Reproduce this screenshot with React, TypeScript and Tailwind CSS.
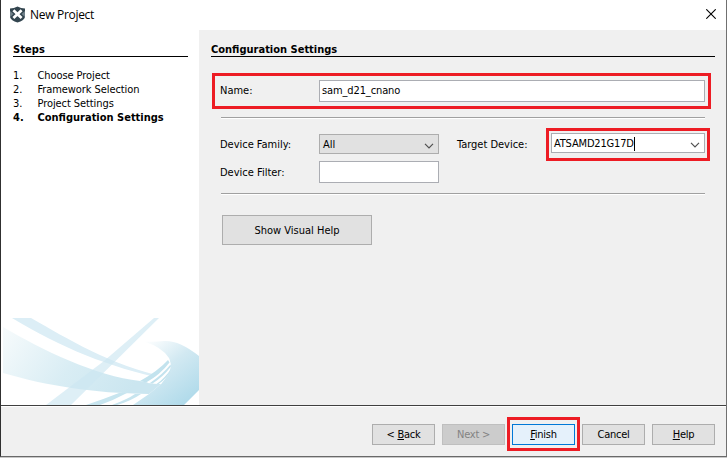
import React from "react";

const steps = ["Choose Project", "Framework Selection", "Project Settings", "Configuration Settings"];

function Logo() {
  return (
    <svg width="17" height="17" viewBox="0 0 17 17" className="shrink-0">
      <path d="M1 2.5 Q5 2.5 8.5 0.5 Q12 2.5 16 2.5 V11 Q15 14.5 8.5 16.5 Q2 14.5 1 11Z" fill="#33454f" />
      <path d="M1 5 L4.5 8 L1 11Z M16 5 L12.5 8 L16 11Z" fill="#71818a" />
      <path d="M4.4 4.2 L12.6 12 M12.6 4.2 L4.4 12" stroke="#fff" strokeWidth="2.7" />
    </svg>
  );
}

function Swoosh() {
  return (
    <svg width="196" height="87" viewBox="3 318 196 87" className="block">
      <defs>
        <linearGradient id="wide" x1="0" y1="0" x2="1" y2="0.3">
          <stop offset="0" stopColor="#f7fbfc" />
          <stop offset="0.55" stopColor="#d9edf4" />
          <stop offset="1" stopColor="#cbe6f0" />
        </linearGradient>
        <linearGradient id="curl" gradientUnits="userSpaceOnUse" x1="146" y1="340" x2="192" y2="400">
          <stop offset="0" stopColor="#ffffff" />
          <stop offset="0.45" stopColor="#d2e9f2" />
          <stop offset="1" stopColor="#afdaea" />
        </linearGradient>
      </defs>
      <path d="M3 327 C42 350 96 376 140 381 C149 383 157 384 161 384 L149 394 C92 393 48 386 3 373Z" fill="url(#wide)" />
      <path d="M12 318 H31 C68 339 110 365 167 377.5 L165 379 C108 367 62 348 12 318Z" fill="#dceef6" />
      <path d="M154 318 H159 L71 405 H46 L104 361Z" fill="#cde7f1" fillOpacity="0.65" />
      <path d="M86 405 Q104 399 119 393 H127 Q114 400 100 405Z M112 405 Q128 399 135 394 H141 Q131 401 117 405Z" fill="#c7e5ef" />
      <path d="M144 341.5 Q155 342 164 341 Q179 340 199 356 V390 L184 405 H133 L149 394 L161 384 Q174 367 169 358 Q162 347 144 341.5Z" fill="url(#curl)" />
      <path d="M161 384 L147 383 Q161 373 169 360 Q175 368 161 384Z" fill="#fff" />
      <path d="M140 381 Q158 371 168 360 L169.5 362.5 Q160 375 146 382.5Z M150 383 Q163 374 170.5 364.5 L171 366.5 Q163 377 152.5 383.5Z M156.5 384 Q165 378 171 369 Q168 378 158.5 384Z" fill="#c3e3ee" />
    </svg>
  );
}

function Chevron() {
  return (
    <svg width="10" height="6" viewBox="0 0 10 6" className="shrink-0">
      <path d="M1 0.8 L5 4.8 L9 0.8" fill="none" stroke="#505050" strokeWidth="1.2" />
    </svg>
  );
}

function Highlight({ className }: { className: string }) {
  return <div className={`pointer-events-none absolute border-[3px] border-[#ed1c24] ${className}`} />;
}

function Rule() {
  return <div className="ml-[10px] h-[2px] w-[484px] shrink-0 border-b border-white bg-[#a0a0a0]" />;
}

function FooterButton({ children, className = "border-[#adadad] bg-[#e1e1e1]" }: { children: React.ReactNode; className?: string }) {
  return <button className={`h-[21px] w-[63px] border text-center leading-[18px] tracking-[-0.25px] ${className}`}>{children}</button>;
}

export default function App() {
  return (
    <div className="flex h-[458px] w-[727px] flex-col overflow-hidden bg-[#c8c8c8] font-['DejaVu_Sans_Condensed','DejaVu_Sans',sans-serif] text-[11px] leading-[14px] text-black [font-stretch:condensed]">
      <div className="flex h-[457px] flex-col border-x border-b border-l-[#303030] border-r-[#707070] border-b-[#696969] bg-[#f0f0f0]">
        <header className="flex h-[30px] shrink-0 items-center bg-white pl-2 pr-[10px]">
          <div className="mt-[-2px]"><Logo /></div>
          <h1 className="ml-[4px] flex-1 font-['Open_Sans',sans-serif] text-[12px] tracking-[-0.3px] [font-stretch:normal]">New Project</h1>
          <svg width="10" height="10" viewBox="0 0 10 10" className="mt-[-2px]">
            <path d="M0.3 0.3 L9.7 9.7 M9.7 0.3 L0.3 9.7" stroke="#000" strokeWidth="1.1" />
          </svg>
        </header>
        <div className="flex h-[375px] shrink-0">
          <aside className="flex w-[198px] shrink-0 flex-col bg-white">
            <h2 className="ml-3 mt-3 h-[15px] w-[175px] border-b border-black pt-px font-bold tracking-[0.1px]">Steps</h2>
            <ol className="ml-3 mt-[12px]">
              {steps.map((s, i) => (
                <li key={s} className={i === 3 ? "flex font-bold" : "flex tracking-[-0.08px]"}>
                  <span className="w-[24.5px]">{i + 1}.</span>
                  <span className="whitespace-nowrap">{s}</span>
                </li>
              ))}
            </ol>
            <div className="ml-[2px] mt-auto">
              <Swoosh />
            </div>
          </aside>
          <main className="flex flex-1 flex-col pl-3">
            <h2 className="mt-3 h-[15px] w-[504px] shrink-0 border-b border-black pt-px font-bold">Configuration Settings</h2>
            <div className="relative mt-[23px] flex h-[22px] shrink-0 items-center pl-[9px]">
              <label className="w-[99px]">Name:</label>
              <div className="h-[22px] w-[386px] border border-[#abadb3] bg-white pl-[2px] pt-[3px] tracking-[-0.12px]">sam_d21_cnano</div>
              <Highlight className="left-[1px] top-[-7px] h-[36px] w-[499px]" />
            </div>
            <div className="h-[15px] shrink-0" />
            <Rule />
            <div className="relative mt-[14px] flex h-[21px] shrink-0 items-start pl-[9px]">
              <label className="mt-[5px] w-[99px] tracking-[-0.02px]">Device Family:</label>
              <div className="mt-[1px] flex h-[20px] w-[120px] items-center justify-between border border-[#adadad] bg-[#e1e1e1] pl-[3px] pr-[4px]">
                <span className="mt-px">All</span>
                <div className="mt-1"><Chevron /></div>
              </div>
              <label className="ml-[18px] mt-[5px] w-[94px] tracking-[-0.02px]">Target Device:</label>
              <div className="flex h-[20px] w-[154px] items-center justify-between border border-[#abadb3] bg-white pl-[2px] pr-[4px]">
                <span className="mt-px border-r border-black tracking-[-0.17px]">ATSAMD21G17D</span>
                <div className="mt-1"><Chevron /></div>
              </div>
              <Highlight className="left-[335px] top-[-5px] h-[33px] w-[164px]" />
            </div>
            <div className="mt-[7px] flex h-[22px] shrink-0 items-center pl-[9px]">
              <label className="mt-[2px] w-[99px]">Device Filter:</label>
              <div className="h-[22px] w-[120px] border border-[#abadb3] bg-white" />
            </div>
            <div className="h-[10px] shrink-0" />
            <Rule />
            <button className="ml-[11px] mt-[20px] h-[30px] w-[150px] border border-[#adadad] bg-[#e1e1e1] pt-[2px]">Show Visual Help</button>
          </main>
        </div>
        <footer className="relative flex h-[51px] shrink-0 gap-[7px] border-t border-[#404040] pl-[371px] pt-[18px] shadow-[inset_0_1px_0_#fff]">
          <FooterButton>&lt; <u>B</u>ack</FooterButton>
          <FooterButton className="border-[#bfbfbf] bg-[#cccccc] text-[#838383]">Next &gt;</FooterButton>
          <FooterButton className="border-[#0078d7] bg-[#e5f1fb]"><u>F</u>inish</FooterButton>
          <FooterButton>Cancel</FooterButton>
          <FooterButton><u>H</u>elp</FooterButton>
          <Highlight className="left-[506px] top-[11px] h-[34px] w-[73px]" />
        </footer>
      </div>
    </div>
  );
}
